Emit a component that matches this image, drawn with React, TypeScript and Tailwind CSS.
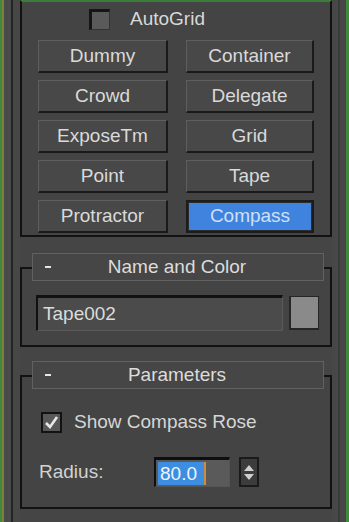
import React from "react";

const font = { fontFamily: '"Liberation Sans", Arial, sans-serif' };

function Btn({ label, active }: { label: string; active?: boolean }) {
  if (active) {
    return (
      <div className="h-[33px] border-2 border-[#1c1c1c] bg-[#2c2c2c] p-[1px] flex">
        <div className="flex-1 bg-[#3f83df] flex items-center justify-center text-[19px] text-[#cfe0f4]">
          {label}
        </div>
      </div>
    );
  }
  return (
    <div className="h-[33px] border-t border-l border-t-[#5e5e5e] border-l-[#5e5e5e] border-b-2 border-r-2 border-b-[#1a1a1a] border-r-[#1a1a1a] bg-[#484848] flex items-center justify-center text-[19px] text-[#dadada]">
      {label}
    </div>
  );
}

function Rollout({
  title,
  mt,
  children,
}: {
  title: string;
  mt: string;
  children: React.ReactNode;
}) {
  return (
    <div className={mt}>
      <div className="relative z-10 ml-[12px] mr-[8px] h-[28px] border border-[#616161] bg-[#464646] flex items-center">
        <div className="w-[18px] flex justify-end">
          <div className="w-[6px] h-[2px] bg-[#e6e6e6]" />
        </div>
        <div className="flex-1 text-center text-[19px] text-[#dcdcdc] pr-[20px]">{title}</div>
      </div>
      <div className="-mt-[14px] border-2 border-[#121212] bg-[#444444]">{children}</div>
    </div>
  );
}

export default function App() {
  const names = [
    ["Dummy", "Container"],
    ["Crowd", "Delegate"],
    ["ExposeTm", "Grid"],
    ["Point", "Tape"],
    ["Protractor", "Compass"],
  ];
  return (
    <div className="w-[349px] h-[522px] bg-[#454545] flex overflow-hidden" style={font}>
      <div className="w-[2px] bg-[#3f8a3c]" />
      <div className="w-[2px] bg-[#7d7f3e]" />
      <div className="w-[7px] bg-[#4a4a4a]" />
      <div className="w-[2px] bg-[#242424]" />
      <div className="w-[7px] bg-[#474747]" />
      <div className="w-[312px] flex flex-col">
        {/* top group */}
        <div className="border-t-2 border-t-[#3d7d3a] border-x-2 border-x-[#121212] border-b-2 border-b-[#121212] bg-[#444444] h-[237px]">
          <div className="mt-[6px] h-[22px] pl-[67px] flex items-center gap-[20px]">
            <div className="w-[21px] h-[21px] border-t-[3px] border-l-[3px] border-[#151515] border-b border-r border-b-[#333] border-r-[#333] bg-[#5a5a5a]" />
            <span className="text-[19px] text-[#d8d8d8]">AutoGrid</span>
          </div>
          <div className="mt-[10px] pl-[16px] pr-[14px] grid grid-cols-[130px_128px] gap-x-[18px] gap-y-[7px]">
            {names.flat().map((n) => (
              <Btn key={n} label={n} active={n === "Compass"} />
            ))}
          </div>
        </div>

        <Rollout title="Name and Color" mt="mt-[16px]">
          <div className="pt-[26px] pb-[14px] pl-[14px] pr-[8px] flex items-center gap-[6px]">
            <div className="w-[247px] h-[36px] border-t-[3px] border-l-2 border-[#111] border-b border-r border-b-[#5a5a5a] border-r-[#5a5a5a] bg-[#4b4b4b] flex items-center pl-[5px] text-[19px] text-[#dcdcdc]">
              Tape002
            </div>
            <div className="w-[30px] h-[34px] border border-[#262626] border-l-2 border-b-2 bg-[#8a8a8a]" />
          </div>
        </Rollout>

        <Rollout title="Parameters" mt="mt-[14px]">
          <div className="pt-[35px] pb-[20px]">
            <div className="pl-[19px] flex items-center gap-[12px] h-[21px]">
              <div className="w-[21px] h-[21px] border-2 border-[#121212] bg-[#585858] flex items-center justify-center">
                <svg width="15" height="15" viewBox="0 0 15 15">
                  <path d="M2 8 L6 12 L13 2" stroke="#e8e8e8" strokeWidth="2.6" fill="none" />
                </svg>
              </div>
              <span className="text-[19px] text-[#d6d6d6]">Show Compass Rose</span>
            </div>
            <div className="mt-[24px] pl-[17px] flex items-center h-[30px]">
              <span className="w-[115px] text-[19px] text-[#d2d2d2]">Radius:</span>
              <div className="w-[76px] h-[30px] border-t-[3px] border-l-2 border-[#0e0e0e] border-b border-r border-b-[#555] border-r-[#555] bg-[#5a5a5a] flex items-center pl-[2px]">
                <div className="h-[23px] w-[46px] bg-[#3d8de0] text-[19px] text-[#eef5ff] flex items-center pl-[2px] leading-none">
                  80.0
                </div>
                <div className="w-[2px] h-[23px] bg-[#d08a3a]" />
              </div>
              <div className="ml-[9px] w-[20px] h-[30px] border-2 border-[#1a1a1a] bg-[#3c3c3c] flex flex-col items-center justify-center gap-[3px]">
                <svg width="10" height="6" viewBox="0 0 10 6">
                  <path d="M0 6 L5 0 L10 6 Z" fill="#cfcfcf" />
                </svg>
                <svg width="10" height="6" viewBox="0 0 10 6">
                  <path d="M0 0 L5 6 L10 0 Z" fill="#cfcfcf" />
                </svg>
              </div>
            </div>
          </div>
        </Rollout>
      </div>
      <div className="w-[6px] bg-[#474747]" />
      <div className="w-[2px] bg-[#3a3a3a]" />
      <div className="w-[6px] bg-[#474747]" />
      <div className="w-[3px] bg-[#3f8a3c]" />
    </div>
  );
}
